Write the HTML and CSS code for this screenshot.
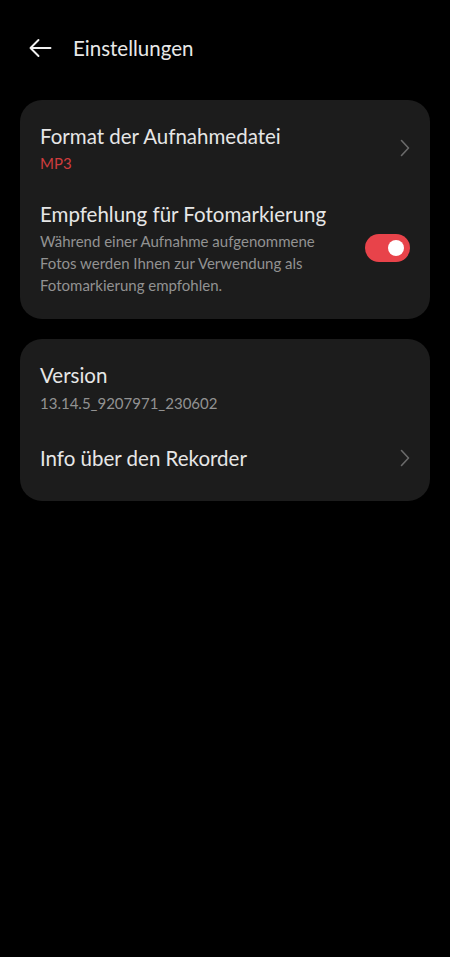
FILE: index.html
```html
<!DOCTYPE html>
<html lang="de">
<head>
<meta charset="utf-8">
<meta name="viewport" content="width=device-width, initial-scale=1">
<title>Einstellungen</title>
<link rel="stylesheet" href="styles.css">
</head>
<body>
<div class="screen">
  <header class="topbar">
    <svg class="back" width="24" height="20" viewBox="0 0 24 20" aria-hidden="true">
      <path d="M22.5 10H2.5M10.5 2L2.5 10L10.5 18" fill="none" stroke="#f0f0f0" stroke-width="1.9" stroke-linecap="round" stroke-linejoin="round"/>
    </svg>
    <h1 class="title">Einstellungen</h1>
  </header>

  <section class="card card-first">
    <div class="row row-format">
      <div class="row-text">
        <div class="row-title">Format der Aufnahmedatei</div>
        <div class="row-value">MP3</div>
      </div>
      <svg class="chevron" width="10" height="18" viewBox="0 0 10 18" aria-hidden="true">
        <path d="M1.5 1.5L8.5 9L1.5 16.5" fill="none" stroke="#6a6a6a" stroke-width="1.6" stroke-linecap="round" stroke-linejoin="round"/>
      </svg>
    </div>
    <div class="row row-photo">
      <div class="row-text">
        <div class="row-title">Empfehlung für Fotomarkierung</div>
        <div class="row-desc">Während einer Aufnahme aufgenommene Fotos werden Ihnen zur Verwendung als Fotomarkierung empfohlen.</div>
      </div>
      <div class="toggle"><span class="knob"></span></div>
    </div>
  </section>

  <section class="card card-second">
    <div class="row row-version">
      <div class="row-text">
        <div class="row-title">Version</div>
        <div class="row-sub">13.14.5_9207971_230602</div>
      </div>
    </div>
    <div class="row row-info">
      <div class="row-text">
        <div class="row-title">Info über den Rekorder</div>
      </div>
      <svg class="chevron" width="10" height="18" viewBox="0 0 10 18" aria-hidden="true">
        <path d="M1.5 1.5L8.5 9L1.5 16.5" fill="none" stroke="#6a6a6a" stroke-width="1.6" stroke-linecap="round" stroke-linejoin="round"/>
      </svg>
    </div>
  </section>
</div>
</body>
</html>
```

FILE: styles.css
```css
html, body {
  margin: 0;
  padding: 0;
  background: #000;
}

body {
  font-family: Lato, "Noto Sans", sans-serif;
  font-weight: 400;
  color: #e6e6e6;
  width: 450px;
  height: 957px;
  overflow: hidden;
}

.screen {
  padding: 0 20px;
}

.topbar {
  display: flex;
  align-items: center;
  height: 96px;
  padding-left: 8px;
  box-sizing: border-box;
}

.back {
  flex: none;
  margin-right: 21px;
}

.title {
  margin: 0;
  font-size: 20.5px;
  font-weight: 400;
  color: #e8e8e8;
}

.card {
  background: #1c1c1c;
  border-radius: 22px;
  margin-top: 4px;
  padding: 0 20px;
}

.card-first {
  padding-top: 22px;
  padding-bottom: 23px;
}

.card-second {
  margin-top: 20px;
  padding-top: 22px;
  padding-bottom: 29px;
}

.row {
  display: flex;
  align-items: center;
  justify-content: space-between;
}

.row-text {
  flex: 1;
  min-width: 0;
}

.row-title {
  font-size: 20.5px;
  line-height: 28px;
  color: #e6e6e6;
}

.row-value {
  margin-top: 3px;
  font-size: 15px;
  line-height: 20px;
  color: #cf3c3e;
}

.row-photo {
  margin-top: 27px;
}

.row-desc {
  margin-top: 2px;
  font-size: 15px;
  line-height: 22px;
  color: #929292;
  padding-right: 36px;
}

.row-sub {
  margin-top: 3px;
  font-size: 15px;
  line-height: 22px;
  color: #929292;
}

.row-info {
  margin-top: 30px;
}

.chevron {
  flex: none;
}

.toggle {
  flex: none;
  position: relative;
  width: 45px;
  height: 28px;
  border-radius: 14px;
  background: #e8434a;
}

.knob {
  position: absolute;
  top: 6px;
  right: 6px;
  width: 16px;
  height: 16px;
  border-radius: 50%;
  background: #ffffff;
}
```
